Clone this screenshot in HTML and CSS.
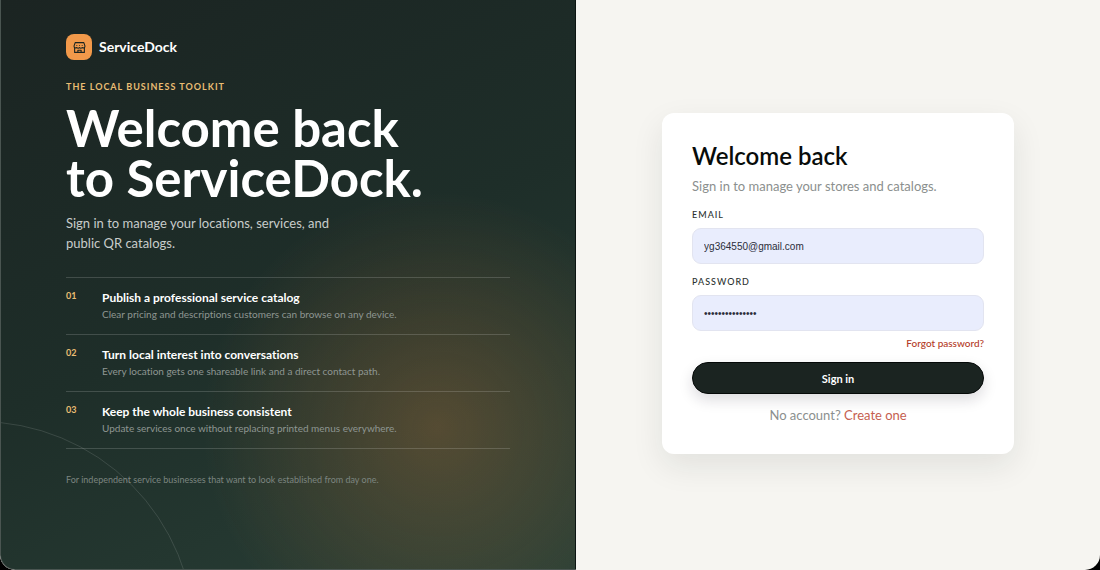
FILE: index.html
```
<!DOCTYPE html>
<html lang="en">
<head>
  <meta charset="utf-8"/>
  <meta name="viewport" content="width=device-width, initial-scale=1"/>
  <title>Sign in - ServiceDock</title>
  <link rel="stylesheet" href="styles.css">
</head>
<body>
  <div class="page">
    <section class="intro">
      <div class="brand">
        <span class="brand-icon">
          <svg viewBox="0 0 24 24" aria-hidden="true">
            <path d="M4 3h16l2 6v1a3 3 0 0 1-5 2 3 3 0 0 1-5 0 3 3 0 0 1-5 0 3 3 0 0 1-5-2V9z"/>
            <path d="M3 12v9h18v-9"/>
            <path d="M9 21v-4h6v4"/>
            <path d="M7 8v1M12 8v1M17 8v1"/>
          </svg>
        </span>
        <span>ServiceDock</span>
      </div>
      <p class="eyebrow">The local business toolkit</p>
      <h1>Welcome back<br/>to ServiceDock.</h1>
      <p class="lead">Sign in to manage your locations, services, and<br/>public QR catalogs.</p>
      <ol class="benefits">
        <li>
          <span class="number">01</span>
          <div>
            <h3>Publish a professional service catalog</h3>
            <p>Clear pricing and descriptions customers can browse on any device.</p>
          </div>
        </li>
        <li>
          <span class="number">02</span>
          <div>
            <h3>Turn local interest into conversations</h3>
            <p>Every location gets one shareable link and a direct contact path.</p>
          </div>
        </li>
        <li>
          <span class="number">03</span>
          <div>
            <h3>Keep the whole business consistent</h3>
            <p>Update services once without replacing printed menus everywhere.</p>
          </div>
        </li>
      </ol>
      <p class="footnote">For independent service businesses that want to look established from day one.</p>
    </section>
    <main class="auth">
      <form class="card">
        <h2>Welcome back</h2>
        <p class="subtitle">Sign in to manage your stores and catalogs.</p>
        <label for="email">Email</label>
        <input id="email" type="email" value="yg364550@gmail.com" autocomplete="email"/>
        <label for="password">Password</label>
        <input id="password" type="password" value="servicedock2024" autocomplete="current-password"/>
        <a class="forgot" href="#forgot">Forgot password?</a>
        <button type="submit">Sign in</button>
        <p class="signup">No account? <a href="#register">Create one</a></p>
      </form>
    </main>
  </div>
</body>
</html>
```
FILE: styles.css
```
* { box-sizing: border-box; }
body { margin: 0; background: #000; font-family: Lato, "Open Sans", sans-serif; font-variant-ligatures: none; }
h1, h2, h3, p, ol { margin: 0; padding: 0; }
a { color: #b33a26; text-decoration: none; }

.page {
  display: grid; grid-template-columns: 11fr 10fr; min-height: 100vh;
  border-radius: 0 0 15px 15px; overflow: hidden; background: #f6f5f1;
}

/* left panel */
.intro {
  position: relative; overflow: hidden; padding: 34px 65px;
  border: 1px solid #4a5551; border-top: 0; border-right-color: #0c1512;
  border-bottom-left-radius: 15px; color: #fff;
  background:
    radial-gradient(circle at 76% 75%, rgba(240, 140, 60, 0.24), rgba(240, 140, 60, 0) 235px),
    linear-gradient(155deg, #1b2422 0%, #1e2e29 50%, #293f36 100%);
}
.intro::after {
  content: ""; position: absolute; left: -238px; bottom: -284px; width: 430px; height: 430px;
  border: 1px solid rgba(255, 255, 255, 0.12); border-radius: 50%;
}
.brand { display: flex; align-items: center; gap: 7px; font-size: 14px; line-height: 26px; font-weight: 700; }
.brand-icon { display: flex; align-items: center; justify-content: center; width: 26px; height: 26px; border-radius: 8px; background: #f2994a; }
.brand-icon svg { width: 13px; height: 13px; fill: none; stroke: #1b2421; stroke-width: 2; stroke-linejoin: round; }
.eyebrow { margin-top: 21px; color: #e9bd73; font-size: 9px; line-height: 12px; font-weight: 700; letter-spacing: 1px; text-transform: uppercase; }
h1 { margin-top: 10px; font-size: 51px; line-height: 50px; font-weight: 700; }
.lead { margin-top: 10px; color: #c8cccb; font-size: 13px; line-height: 20px; }
.benefits { margin-top: 24px; list-style: none; border-bottom: 1px solid rgba(255, 255, 255, 0.16); }
.benefits li { display: grid; grid-template-columns: 36px 1fr; padding: 12px 0; border-top: 1px solid rgba(255, 255, 255, 0.16); }
.number { color: #e9bd73; font-size: 9px; line-height: 12px; font-weight: 700; }
h3 { font-size: 12px; line-height: 16px; font-weight: 700; }
.benefits p { color: #8e9692; font-size: 10px; line-height: 16px; }
.footnote { margin-top: 24px; color: #7c8580; font-size: 9px; line-height: 14px; }

/* sign in card */
.auth { display: flex; align-items: center; justify-content: center; padding: 24px 24px 27px; }
.card {
  display: flex; flex-direction: column; width: 100%; max-width: 352px; padding: 30px;
  border-radius: 12px; background: #fff; box-shadow: 0 12px 32px rgba(27, 36, 33, 0.09);
}
h2 { color: #080c0a; font-size: 24px; line-height: 26px; font-weight: 600; }
.subtitle { margin: 8px 0 2px; color: #8b8f8e; font-size: 13px; line-height: 18px; }
label { margin-top: 12px; color: #2b3230; font-size: 9px; line-height: 12px; font-weight: 500; letter-spacing: 1px; text-transform: uppercase; }
input {
  height: 36px; margin-top: 7px; padding: 0 11px; border: 1px solid #e2e4f0; border-radius: 9px;
  background: #e9edfd; color: #2b2e3a; font-family: "Liberation Sans", Arial, sans-serif; font-size: 10px;
}
.forgot { align-self: flex-end; margin-top: 5px; font-size: 10px; line-height: 14px; font-weight: 500; }
button {
  height: 32px; margin-top: 12px; border: 1px solid #050908; border-radius: 16px; background: #1b2421; color: #fff;
  font: 700 11px Lato, "Open Sans", sans-serif; box-shadow: 0 6px 14px rgba(27, 20, 40, 0.15);
}
.signup { margin-top: 12px; color: #8b8f8e; font-size: 13px; line-height: 18px; text-align: center; }
.signup a { color: #c5604f; }

@media (max-width: 760px) {
  .page { grid-template-columns: 1fr; }
}
```
